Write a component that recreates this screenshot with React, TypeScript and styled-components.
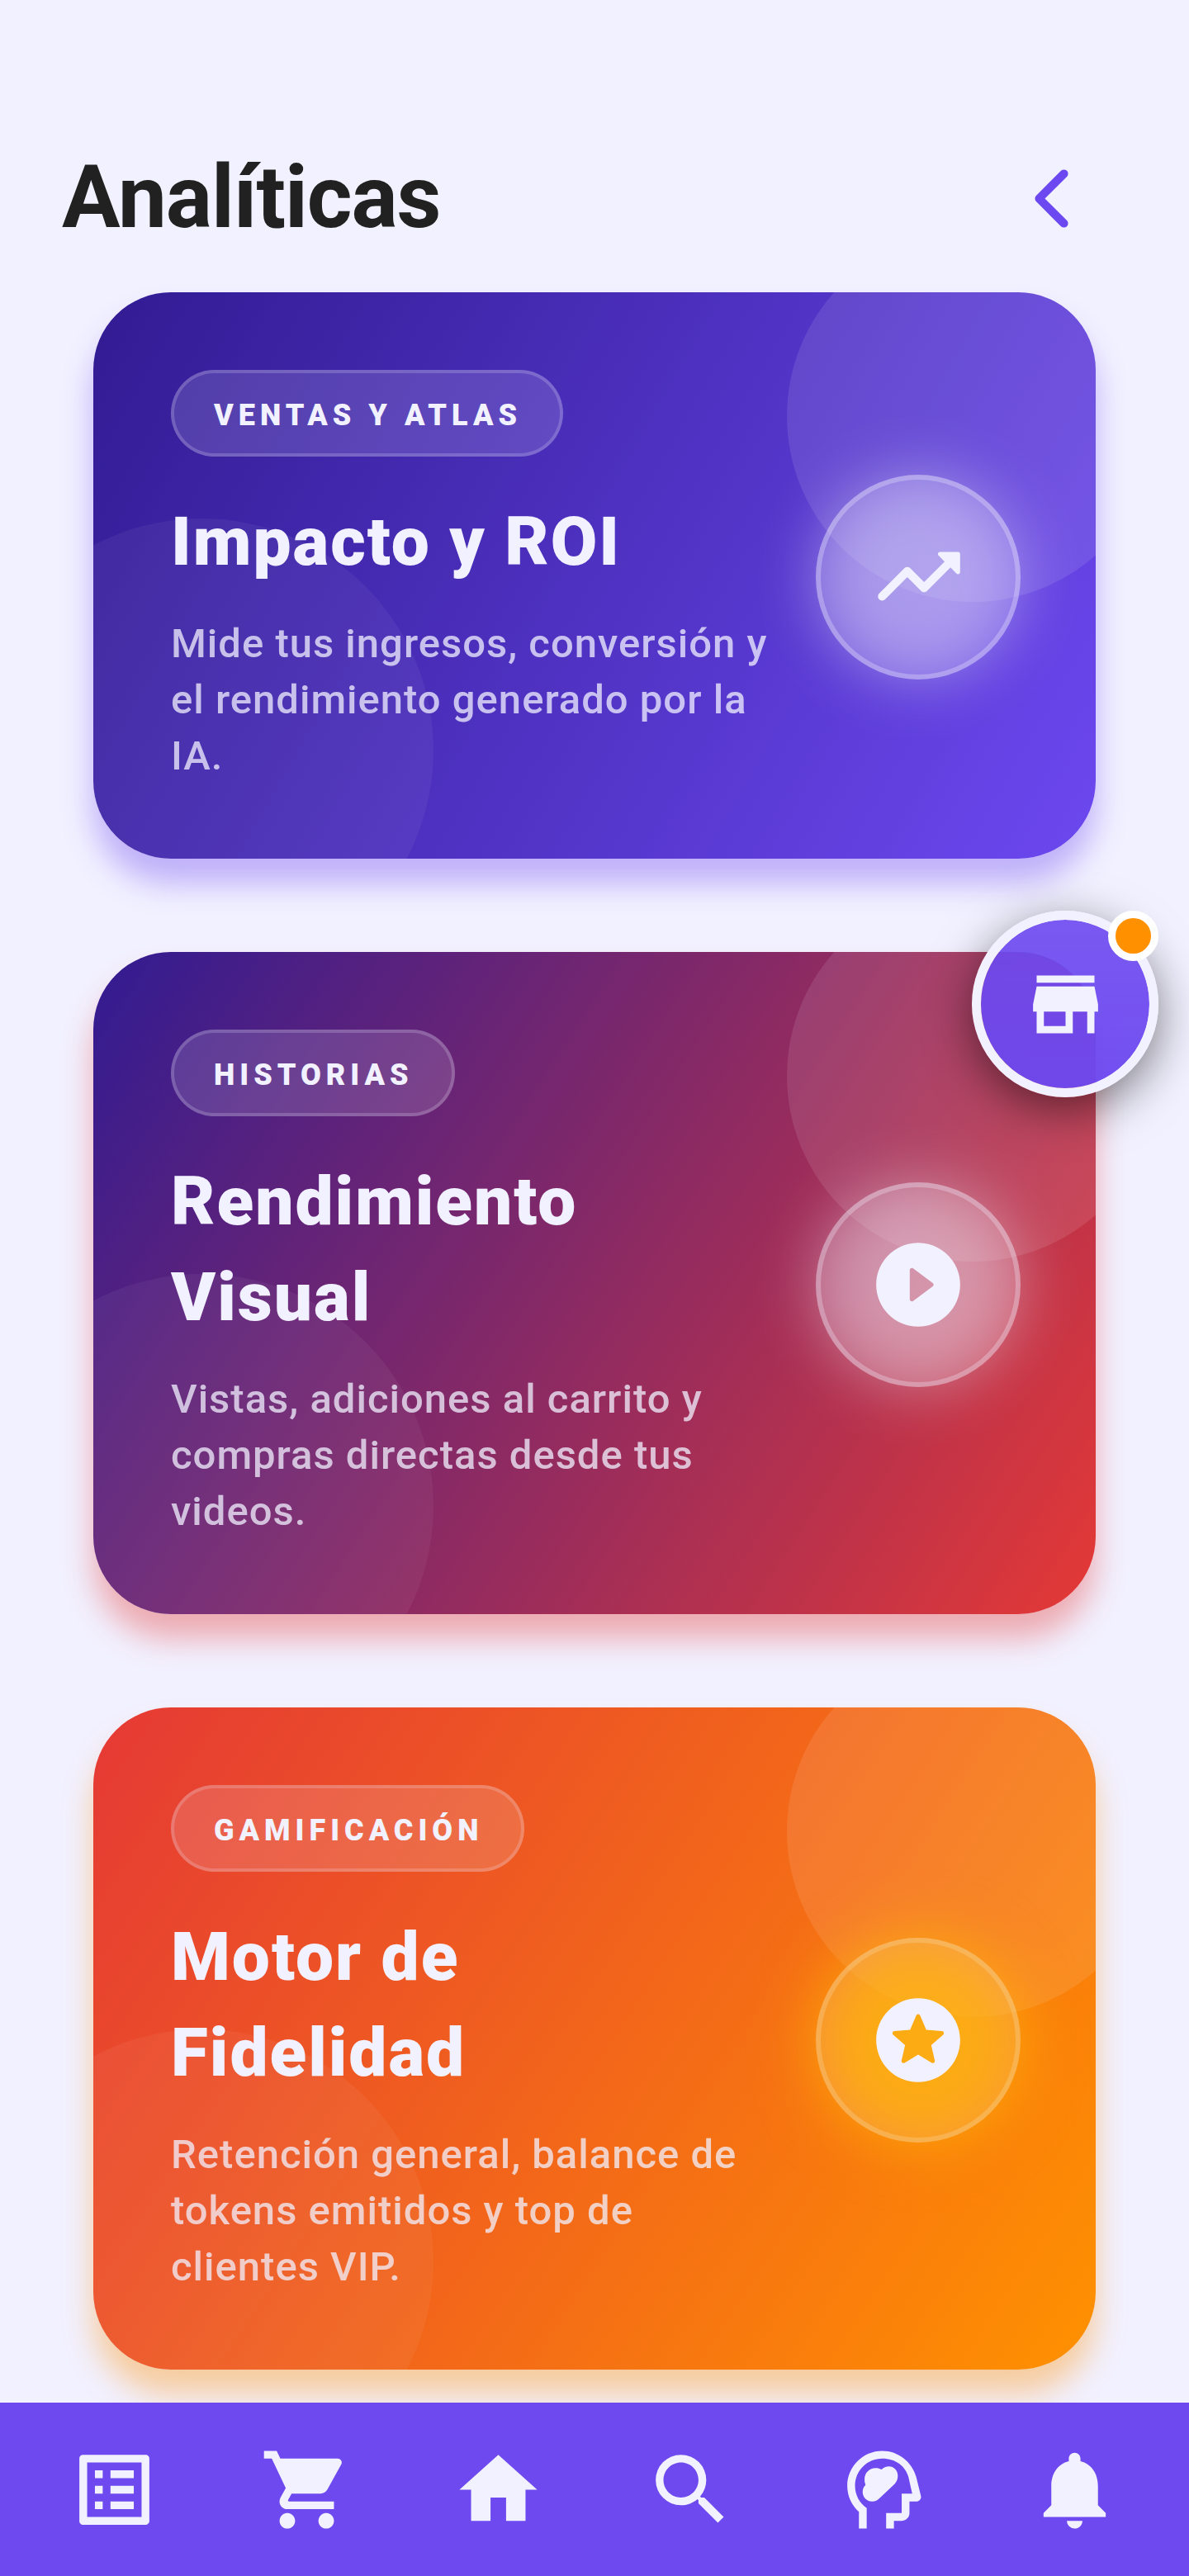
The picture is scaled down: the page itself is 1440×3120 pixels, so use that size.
import React from 'react';
import styled, { createGlobalStyle } from 'styled-components';
import { MdListAlt, MdShoppingCart, MdHome, MdSearch, MdNotifications, MdStore } from 'react-icons/md';

const GlobalStyle = createGlobalStyle`
  * { box-sizing: border-box; }
  body {
    margin: 0;
    background: #f2f1ff;
    font-family: Roboto, "Liberation Sans", sans-serif;
  }
  h1, h2, p { margin: 0; }
  button { border: 0; padding: 0; font: inherit; cursor: pointer; }
`;

const Screen = styled.div`
  display: flex;
  flex-direction: column;
  min-height: 100vh;
  background: #f2f1ff;
`;

const Header = styled.header`
  display: flex;
  align-items: center;
  justify-content: space-between;
  padding: 178px 113px 52px 75px;
`;

const PageTitle = styled.h1`
  font-size: 105px;
  line-height: 124px;
  font-weight: 700;
  letter-spacing: -1px;
  color: #212121;
`;

const BackButton = styled.button`
  display: flex;
  background: none;
  color: #6c48f0;
`;

const Cards = styled.main`
  display: flex;
  flex-direction: column;
  flex: 1;
  gap: 113px;
  padding: 0 113px 40px;
`;

const Card = styled.article<{ $from: string; $to: string; $angle: number; $shadow: string }>`
  position: relative;
  display: flex;
  align-items: center;
  gap: 56px;
  padding: 94px 91px 90px 94px;
  border-radius: 94px;
  background: linear-gradient(${p => p.$angle}deg, ${p => p.$from}, ${p => p.$to});
  box-shadow: 0 30px 36px ${p => p.$shadow};
`;

const Bubbles = styled.div`
  position: absolute;
  inset: 0;
  overflow: hidden;
  border-radius: 94px;

  &::before, &::after {
    content: "";
    position: absolute;
    border-radius: 50%;
  }
  &::before {
    top: -75px;
    right: -76px;
    width: 450px;
    height: 450px;
    background: rgba(255, 255, 255, 0.1);
  }
  &::after {
    bottom: -150px;
    left: -150px;
    width: 562px;
    height: 562px;
    background: rgba(255, 255, 255, 0.05);
  }
`;

const CardBody = styled.div`
  position: relative;
  display: flex;
  flex: 1;
  flex-direction: column;
  align-items: flex-start;
`;

const Tag = styled.span`
  padding: 32px 46px 27px 48px;
  border: 4px solid rgba(242, 241, 255, 0.2);
  border-radius: 53px;
  background: rgba(242, 241, 255, 0.15);
  color: #f2f1ff;
  font-size: 36px;
  line-height: 38px;
  font-weight: 900;
  letter-spacing: 6px;
`;

const CardTitle = styled.h2`
  margin-top: 45px;
  font-size: 82px;
  line-height: 116px;
  font-weight: 900;
  letter-spacing: 2px;
  color: #f2f1ff;
`;

const CardText = styled.p`
  margin-top: 32px;
  font-size: 49px;
  line-height: 68px;
  font-weight: 500;
  letter-spacing: 1px;
  color: rgba(242, 241, 255, 0.75);
`;

const Medallion = styled.div<{ $glow: string }>`
  position: relative;
  display: flex;
  flex: none;
  align-items: center;
  justify-content: center;
  width: 248px;
  height: 248px;
  border: 6px solid rgba(242, 241, 255, 0.3);
  border-radius: 50%;
  background: rgba(242, 241, 255, 0.2);
  color: #f2f1ff;

  &::before {
    content: "";
    position: absolute;
    inset: -6px;
    border-radius: 50%;
    background: ${p => p.$glow};
    filter: blur(38px);
  }
  svg { position: relative; }
`;

const StoreButton = styled.button`
  position: fixed;
  top: 1103px;
  right: 37px;
  display: flex;
  align-items: center;
  justify-content: center;
  width: 226px;
  height: 226px;
  border: 11px solid #f2f1ff;
  border-radius: 50%;
  background: linear-gradient(rgba(108, 72, 240, 0.9), rgba(108, 72, 240, 0.96)) padding-box;
  box-shadow: 0 15px 56px rgba(0, 0, 0, 0.5);
  color: #f2f1ff;
`;

const AlertDot = styled.span`
  position: absolute;
  top: -11px;
  right: -11px;
  width: 61px;
  height: 61px;
  border: 9px solid #fff;
  border-radius: 50%;
  background: #ff9100;
`;

const NavBar = styled.nav`
  position: sticky;
  bottom: 0;
  display: flex;
  align-items: center;
  justify-content: space-between;
  height: 210px;
  padding: 0 82px;
  background: #6d49ef;
`;

const NavButton = styled.button`
  display: flex;
  background: none;
  color: #f2f1ff;
`;

type IconProps = { size: number };

const BackIcon = ({ size }: IconProps) => (
  <svg width={size} height={size} viewBox="0 0 512 512" fill="none" stroke="currentColor" strokeWidth="48" strokeLinecap="round" strokeLinejoin="round">
    <path d="M328 112L184 256l144 144" />
  </svg>
);

const TrendIcon = ({ size }: IconProps) => (
  <svg width={size} height={size} viewBox="0 0 24 24" fill="currentColor">
    <path d="M16.85 6.85l1.44 1.44-4.88 4.88-3.29-3.29a.996.996 0 0 0-1.41 0l-6 6.01a.996.996 0 1 0 1.41 1.41L9.41 12l3.29 3.29c.39.39 1.02.39 1.41 0l5.59-5.58 1.44 1.44c.31.31.85.09.85-.35V6.5c.01-.28-.21-.5-.49-.5h-4.29c-.45 0-.67.54-.36.85z" />
  </svg>
);

const PlayIcon = ({ size }: IconProps) => (
  <svg width={size} height={size} viewBox="0 0 24 24" fill="currentColor">
    <path d="M12 2C6.48 2 2 6.48 2 12s4.48 10 10 10 10-4.48 10-10S17.52 2 12 2zm-2 13.5v-7c0-.41.47-.65.8-.4l4.67 3.5c.27.2.27.6 0 .8l-4.67 3.5c-.33.25-.8.01-.8-.4z" />
  </svg>
);

const StarIcon = ({ size }: IconProps) => (
  <svg width={size} height={size} viewBox="0 0 24 24" fill="currentColor">
    <path d="M11.99 2C6.47 2 2 6.48 2 12s4.47 10 9.99 10C17.52 22 22 17.52 22 12S17.52 2 11.99 2zm3.23 15.39L12 15.45l-3.22 1.94c-.38.23-.85-.11-.75-.54l.85-3.66-2.83-2.45c-.33-.29-.15-.84.29-.88l3.74-.32 1.46-3.45c.17-.41.75-.41.92 0l1.46 3.44 3.74.32c.44.04.62.59.28.88l-2.83 2.45.85 3.67c.1.43-.36.77-.74.54z" />
  </svg>
);

const MindIcon = ({ size }: IconProps) => (
  <svg width={size} height={size} viewBox="0 0 24 24" fill="currentColor">
    <path d="M6 22v-4.3C4.15 16.05 3 13.65 3 11c0-4.97 4.03-9 9-9 4.15 0 7.64 2.81 8.75 6.75l1.2 4.9c.15.6-.35 1.35-1 1.35H19v3c0 1.1-.9 2-2 2h-2v2h-2v-4h4v-5h2.7l-.95-4.25C18 6 15.5 4 12 4c-3.87 0-7 3.13-7 7 0 2.35 1.15 4.45 3 5.75V22z" />
    <path d="M9.4 15.05c-1.35 0-2.45-1.1-2.45-2.45 0-.7.25-1.35.75-1.8a2.9 2.9 0 0 1-.25-1.5c0-1.6 1.25-2.85 2.85-2.85.6 0 1 .1 1.5.35.5-.5 1.2-.8 1.9-.8C15 6 16 7.05 16 8.4c0 .8-.2 1.45-.8 2.1l-4 3.8c-.5.5-1.1.75-1.8.75z" />
  </svg>
);

const cards = [
  {
    tag: 'VENTAS Y ATLAS', title: 'Impacto y ROI',
    text: 'Mide tus ingresos, conversión y el rendimiento generado por la IA.',
    from: '#311b92', to: '#6c48f0', angle: 120, shadow: 'rgba(108, 72, 240, 0.38)',
    glow: 'rgba(242, 241, 255, 0.4)', Icon: TrendIcon,
  },
  {
    tag: 'HISTORIAS', title: 'Rendimiento Visual',
    text: 'Vistas, adiciones al carrito y compras directas desde tus videos.',
    from: '#311b92', to: '#e53935', angle: 123, shadow: 'rgba(229, 57, 53, 0.38)',
    glow: 'rgba(242, 241, 255, 0.4)', Icon: PlayIcon,
  },
  {
    tag: 'GAMIFICACIÓN', title: 'Motor de Fidelidad',
    text: 'Retención general, balance de tokens emitidos y top de clientes VIP.',
    from: '#e53935', to: '#ff9100', angle: 123, shadow: 'rgba(255, 145, 0, 0.38)',
    glow: 'rgba(255, 180, 5, 0.75)', Icon: StarIcon,
  },
];

const navItems = [
  { label: 'Pedidos', Icon: MdListAlt },
  { label: 'Carrito', Icon: MdShoppingCart },
  { label: 'Inicio', Icon: MdHome },
  { label: 'Buscar', Icon: MdSearch },
  { label: 'Asistente', Icon: MindIcon },
  { label: 'Notificaciones', Icon: MdNotifications },
];

export default function App() {
  return (
    <Screen>
      <GlobalStyle />
      <Header>
        <PageTitle>Analíticas</PageTitle>
        <BackButton aria-label="Volver"><BackIcon size={107} /></BackButton>
      </Header>
      <Cards>
        {cards.map(({ tag, title, text, from, to, angle, shadow, glow, Icon }) => (
          <Card key={tag} $from={from} $to={to} $angle={angle} $shadow={shadow}>
            <Bubbles />
            <CardBody>
              <Tag>{tag}</Tag>
              <CardTitle>{title}</CardTitle>
              <CardText>{text}</CardText>
            </CardBody>
            <Medallion $glow={glow}><Icon size={122} /></Medallion>
          </Card>
        ))}
      </Cards>
      <StoreButton aria-label="Tienda">
        <MdStore size={105} />
        <AlertDot />
      </StoreButton>
      <NavBar>
        {navItems.map(({ label, Icon }) => (
          <NavButton key={label} aria-label={label}><Icon size={113} /></NavButton>
        ))}
      </NavBar>
    </Screen>
  );
}
